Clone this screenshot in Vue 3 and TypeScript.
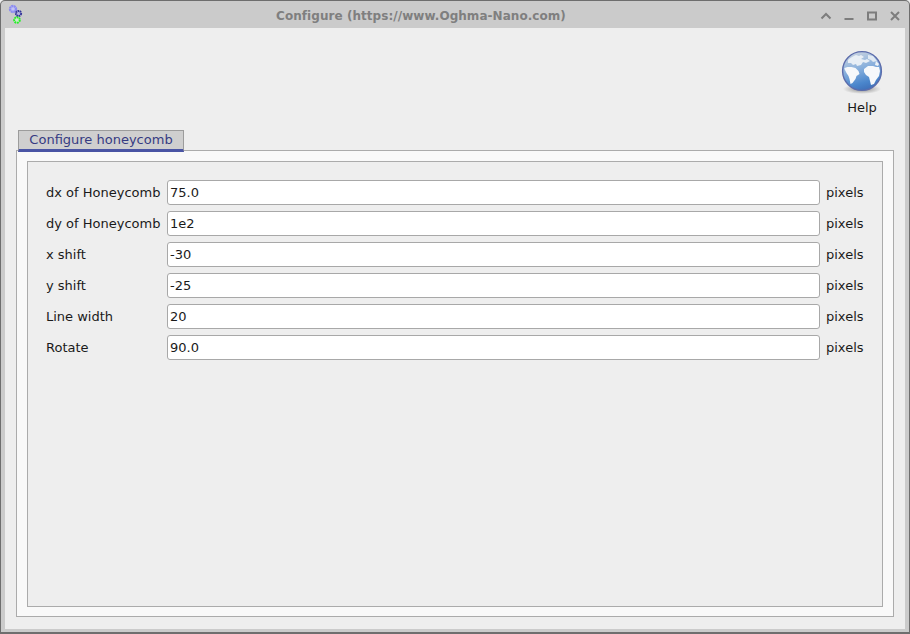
<script setup lang="ts">
const rows = [
  { label: 'dx of Honeycomb', value: '75.0' },
  { label: 'dy of Honeycomb', value: '1e2' },
  { label: 'x shift', value: '-30' },
  { label: 'y shift', value: '-25' },
  { label: 'Line width', value: '20' },
  { label: 'Rotate', value: '90.0' },
]
</script>

<template>
  <div class="window">
    <header class="titlebar">
      <svg class="app-icon" width="20" height="22" viewBox="0 0 20 22">
        <circle cx="8" cy="6" r="3" fill="#c4c4f4" stroke="#8c8cf2" stroke-width="2.4" stroke-dasharray="2 0.4" />
        <circle cx="13.5" cy="10.5" r="2.6" fill="#b0b0dc" stroke="#34349a" stroke-width="2" stroke-dasharray="1.6 0.6" />
        <circle cx="12" cy="17" r="2.8" fill="#cdeccd" stroke="#26ee26" stroke-width="2" stroke-dasharray="1.8 0.7" />
      </svg>
      <div class="title">Configure (https://www.Oghma-Nano.com)</div>
      <div class="controls">
        <svg width="12" height="12" viewBox="0 0 12 12"><path d="M1.5 8.5 6 4l4.5 4.5" fill="none" stroke="#7d7d7d" stroke-width="2" /></svg>
        <svg width="12" height="12" viewBox="0 0 12 12"><path d="M1.5 9h9" fill="none" stroke="#7d7d7d" stroke-width="2" /></svg>
        <svg width="12" height="12" viewBox="0 0 12 12"><path d="M2 2.5h8v7H2z" fill="none" stroke="#7d7d7d" stroke-width="2" /></svg>
        <svg width="12" height="12" viewBox="0 0 12 12"><path d="M2 2l8 8M10 2l-8 8" fill="none" stroke="#7d7d7d" stroke-width="2" /></svg>
      </div>
    </header>

    <main class="body">
      <div class="toolbar">
        <div class="help">
          <svg class="globe" width="44" height="46" viewBox="0 0 44 46">
            <defs>
              <linearGradient id="sea" x1="0.3" y1="0" x2="0.6" y2="1">
                <stop offset="0" stop-color="#c9d3e0" />
                <stop offset="0.45" stop-color="#86aedc" />
                <stop offset="0.8" stop-color="#4a86cc" />
                <stop offset="1" stop-color="#3f6fb8" />
              </linearGradient>
              <radialGradient id="shade" cx="0.5" cy="0.5" r="0.5">
                <stop offset="0" stop-color="#444" stop-opacity="0.6" />
                <stop offset="1" stop-color="#444" stop-opacity="0" />
              </radialGradient>
            </defs>
            <ellipse cx="22" cy="39" rx="19" ry="5" fill="url(#shade)" />
            <circle cx="22" cy="21" r="19.4" fill="url(#sea)" stroke="#5c6cab" stroke-width="1.4" />
            <path d="M8 10c2-2 5-4 8-5l3 1 2-1 3 2-3 2 4 1 2-1 3 2-4 2-3-1-2 3-4 1-1-2-3 1-2-2-3 0z" fill="#eef2f6" opacity="0.92" />
            <path d="M28 5l5 1 4 5-4 1-2-2-3-1z" fill="#e8eef5" opacity="0.9" />
            <path d="M4.5 18l3-1 4 0 4 1 3 3 1 3-3 2-1 3-3 4-2 1-1-5-1-3-2-3-2-4z" fill="#f6f8fb" />
            <path d="M24 19l4-3 5 0 3 1 3 0 1 4-1 5-3 4-2 4-3 1-1-4-1-4-3-2-2-3z" fill="#f6f8fb" />
            <path d="M36 11l3 3-1 2-3-1z" fill="#eef2f6" />
          </svg>
          <span class="help-label">Help</span>
        </div>
      </div>

      <div class="tabbar">
        <div class="tab">Configure honeycomb</div>
      </div>

      <section class="outer">
        <div class="inner">
          <div v-for="row in rows" :key="row.label" class="row">
            <label class="label">{{ row.label }}</label>
            <input class="field" type="text" :value="row.value" />
            <span class="unit">pixels</span>
          </div>
        </div>
      </section>
    </main>
  </div>
</template>

<style>
html, body { margin: 0; padding: 0; background: #eeeeee; }
</style>

<style scoped>
.window {
  width: 910px;
  height: 634px;
  box-sizing: border-box;
  display: flex;
  flex-direction: column;
  background: #cbcbcb;
  border: 1px solid #6e6e6e;
  border-bottom-width: 2px;
  border-radius: 5px 5px 0 0;
  font-family: "DejaVu Sans", sans-serif;
  font-size: 13px;
  color: #1a1a1a;
  overflow: hidden;
}
.titlebar {
  height: 27px;
  flex: none;
  position: relative;
  display: flex;
  align-items: center;
  justify-content: center;
}
.app-icon {
  position: absolute;
  left: 4px;
  top: 2px;
}
.title {
  font-weight: bold;
  font-size: 12px;
  color: #7f7f7f;
  letter-spacing: 0.05px;
  margin: 2px 68px 0 0;
}
.controls {
  position: absolute;
  right: 8px;
  top: 9px;
  display: flex;
  gap: 11px;
}
.body {
  flex: 1;
  min-height: 0;
  margin: 0 4px 3px 4px;
  background: #eeeeee;
  display: flex;
  flex-direction: column;
  padding: 0 11px 12px 11px;
}
.toolbar {
  height: 102px;
  flex: none;
  display: flex;
  justify-content: flex-end;
}
.help {
  width: 70px;
  margin-right: -3px;
  display: flex;
  flex-direction: column;
  align-items: center;
  padding-top: 22px;
  box-sizing: border-box;
}
.globe { display: block; }
.help-label {
  margin-top: 4px;
  line-height: 16px;
  color: #1a1a1a;
}
.tabbar {
  height: 20px;
  flex: none;
  position: relative;
  z-index: 1;
  margin-left: 2px;
}
.tab {
  width: 166px;
  height: 22px;
  box-sizing: border-box;
  background: #cfcfcf;
  border: 1px solid #9c9c9c;
  border-bottom: 3px solid #4a55a5;
  color: #363b82;
  text-align: center;
  line-height: 18px;
}
.outer {
  flex: 1;
  min-height: 0;
  background: #f9f9f9;
  border: 1px solid #ababab;
  padding: 10px 10px 9px 10px;
  display: flex;
}
.inner {
  flex: 1;
  background: #eeeeee;
  border: 1px solid #ababab;
  padding: 18px 18px 0 18px;
  display: flex;
  flex-direction: column;
  gap: 6px;
}
.row {
  display: flex;
  align-items: center;
  height: 25px;
}
.label {
  width: 121px;
  flex: none;
  white-space: nowrap;
}
.field {
  width: 653px;
  height: 25px;
  flex: none;
  box-sizing: border-box;
  background: #ffffff;
  border: 1px solid #a8a8a8;
  border-radius: 3px;
  padding: 0 2px;
  margin: 0;
  font: inherit;
  color: #1a1a1a;
  outline: none;
}
.unit {
  margin-left: 6px;
}
</style>
